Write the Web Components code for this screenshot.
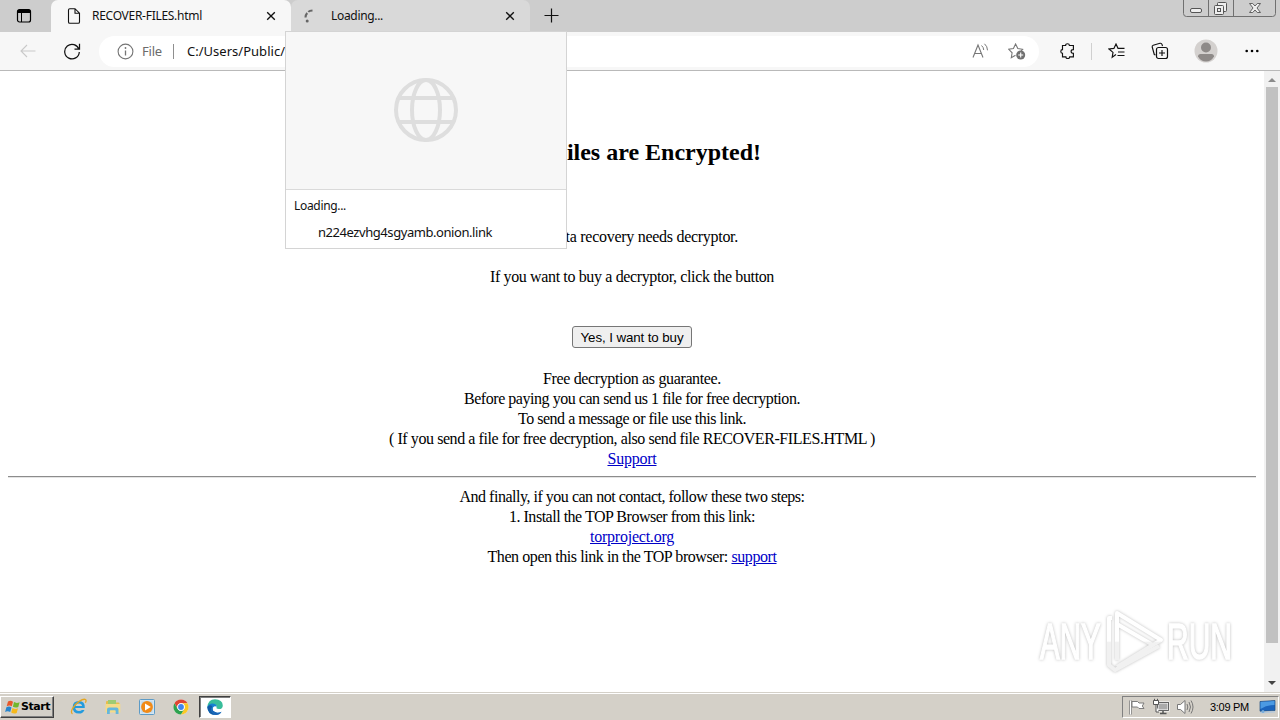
<!DOCTYPE html>
<html lang="en">
<head>
<meta charset="utf-8">
<title>RECOVER-FILES.html</title>
<style>
  html, body { margin: 0; height: 100%; overflow: hidden; }
</style>
</head>
<body>
<desktop-screen></desktop-screen>
<script>
// Text run that spreads its letters to a given width
class FitText extends HTMLElement {
  constructor() {
    super();
    this.attachShadow({ mode: "open" });
    this.shadowRoot.innerHTML = `
      <style>
        :host { display: inline-block; white-space: nowrap; font-variant-ligatures: none; }
      </style><slot></slot>`;
  }

  connectedCallback() {
    const width = Number(this.getAttribute("width"));
    const count = this.textContent.length;
    if (!width || !count) return;
    const natural = this.getBoundingClientRect().width;
    this.style.letterSpacing = (width - natural) / count + "px";
  }
}

// Line icons and small colour icons, keyed by name
const icons = {
  workspace: [16, 16, `<rect x="1.5" y="1.5" width="13" height="12.5" rx="2" fill="none" stroke="#000" stroke-width="1.2"/><path d="M1.5 5V3.2Q1.500 1.500 3.500 1.500h9q2 0 2 1.700V5z"/><path d="M5.500 5v9" stroke="#000"/>`],
  file: [14, 16, `<path d="M1.500 2q0-1.300 1.300-1.300H8l4.500 4.500V14q0 1.300-1.300 1.300H2.800Q1.500 15.300 1.500 14zM8 .8v4.500h4.500" fill="none" stroke="#111" stroke-width="1.100"/>`],
  close: [10, 10, `<path d="M1.200 1.200l7.600 7.600M8.800 1.200L1.200 8.800" stroke="#111" stroke-width="1.350"/>`],
  plus: [15, 15, `<path d="M7.500.5v14M.5 7.500h14" stroke="#111" stroke-width="1.200"/>`],
  spinner: [12, 14, `<path d="M9.500 1.500Q6.500 1.700 5.300 2.900" fill="none" stroke="#666" stroke-width="2"/><path d="M4.200 4Q2.500 6 2.500 8.500" fill="none" stroke="#666" stroke-width="2.100"/><circle cx="4.200" cy="12" r="1.500" fill="#666"/>`],
  back: [16, 14, `<path d="M15.500 7H1M7 1L1 7l6 6" fill="none" stroke="#c9c9c9" stroke-width="1.100"/>`],
  reload: [18, 18, `<path d="M16 7.500A7.300 7.300 0 1 0 16.300 10M16.500 1.800v5.400h-5" fill="none" stroke="#111" stroke-width="1.250"/>`],
  info: [17, 17, `<circle cx="8.500" cy="8.500" r="7.400" fill="none" stroke="#757575" stroke-width="1.100"/><path d="M8.500 7.500v5" stroke="#757575" stroke-width="1.300"/><circle cx="8.500" cy="5" r=".9" fill="#757575"/>`],
  read: [17, 16, `<path d="M1 14.500L6 2l5 12.500M2.700 10.500h6.600" fill="none" stroke="#777" stroke-width="1.100"/><path d="M9.500 2.500q2.200 1.800 2.200 4.500M12.500.8q3 2.600 3 6.500" fill="none" stroke="#777"/>`],
  favadd: [18, 17, `<path d="M7.500 12.300l-4.200 2.500.8-5L.7 6.300l4.700-.8L7.600 1l2.200 4.500 4.800.8-1.500 1.500" fill="none" stroke="#777" stroke-width="1.100"/><circle cx="12.700" cy="12" r="4.500" fill="#707070"/><path d="M12.700 9.500v5M10.200 12h5" stroke="#fff" stroke-width="1.100"/>`],
  puzzle: [16, 16, `<path d="M2.500 2.500h3.100Q5.600.7 7.500.7t1.900 1.800h4v4.100q-2.300 0-2.300 1.800t2.300 1.800v3.700H9.700q0 1.700-1.900 1.700t-1.900-1.700H2.500v-3.700Q.8 10.200.8 8.400t1.700-1.800z" fill="none" stroke="#111" stroke-width="1.150"/>`],
  favorites: [17, 16, `<path d="M8 11.500l-3.800 2.700.8-4.800L1 6l4.900-.6L8 1l2 4.300h6.500M10 9h6.500M9.500 12.500h7" fill="none" stroke="#111" stroke-width="1.150"/>`],
  collections: [18, 18, `<path d="M4.500 13l-1.200-.5L1.200 5Q.9 3.600 2.200 3.200L9 1.300q1.500-.3 2 1.100l.5 1.800" fill="none" stroke="#111" stroke-width="1.150"/><rect x="5.500" y="5.500" width="11" height="11" rx="2" fill="none" stroke="#111" stroke-width="1.200"/><path d="M11 8v6M8 11h6" stroke="#111" stroke-width="1.150"/>`],
  avatar: [24, 24, `<circle cx="12" cy="12" r="11.500" fill="#d4d1cf"/><circle cx="12" cy="8.500" r="5" fill="#8e8a88"/><path d="M4 17.500q0-2.500 2.500-2.500h11q2.500 0 2.500 2.500-2.800 5-8 5t-8-5z" fill="#8e8a88"/>`],
  dots: [14, 4, `<circle cx="1.700" cy="2" r="1.300"/><circle cx="7" cy="2" r="1.300"/><circle cx="12.300" cy="2" r="1.300"/>`],
  globe: [66, 66, `<g fill="none" stroke="#dedede" stroke-width="4"><circle cx="33" cy="33" r="30"/><ellipse cx="33" cy="33" rx="14" ry="30"/><path d="M5.500 21h55M5.500 45h55"/></g>`],
  windows: [16, 16, `<path d="M3 2.500q2.500-1.500 5 .2L6.800 7.300Q4.500 5.800 1.700 7.200z" fill="#e8582a"/><path d="M9 3.100q2.500 1.600 5.600.1L13.300 8q-2.700 1.300-5.400-.2z" fill="#71b72b"/><path d="M1.400 8.300q2.700-1.500 5.100.1L5.200 13Q2.700 11.600.1 12.900z" fill="#2685ce"/><path d="M7.500 9q2.800 1.600 5.500.3L11.700 14q-2.800 1.200-5.500-.4z" fill="#f6b91b"/>`],
  ie: [18, 18, `<path d="M14.800 10.100H5.300q.4 2.900 3.700 2.900 2 0 2.900-1.100h2.600q-1.500 3.600-5.500 3.600-6.300 0-6.300-6.300Q2.700 3 9 3q6.200 0 5.800 7.100zM5.400 8.100h6.700Q11.700 5.400 9 5.400q-3 0-3.600 2.700z" fill="#239bdd"/><path d="M2.500 15.800C-.5 14.500 3.200 7.400 9.200 3.400c5.200-3.500 8.300-2.500 6.200 1.400" fill="none" stroke="#e4a621" stroke-width="1.300"/>`],
  explorer: [18, 18, `<path d="M2 4q0-1 1-1h4l1 1.500h6.500q1 0 1 1V10H2z" fill="#e8bd4b"/><path d="M4 2h8v7H4z" fill="#9ecb72"/><path d="M1.500 6h14.800v8.500H1.500z" fill="#f5db88"/><path d="M3 16V11.500q0-2 2-2h7.500q2 0 2 2V16h-2.800v-2.900q0-.8-.8-.8H6.600q-.8 0-.8.8V16z" fill="#65b7dc"/>`],
  media: [18, 18, `<rect x="1.500" y="1.500" width="15" height="15" rx="1" fill="#d3e5f2" stroke="#5d9bc6"/><rect x="3.500" y="3.500" width="11" height="11" fill="#b9d3e6"/><circle cx="9" cy="9" r="5.900" fill="#f18a17"/><path d="M7 5.500v7L12.800 9z" fill="#fff"/>`],
  chrome: [18, 18, `<circle cx="9" cy="9" r="7.500" fill="#fff"/><path d="M2.500 5.250A7.500 7.500 0 0 1 15.500 5.250H9A3.750 3.750 0 0 0 5.750 10.900z" fill="#df4533"/><path d="M15.500 5.250A7.500 7.500 0 0 1 9 16.500l3.250-5.600A3.750 3.750 0 0 0 9 5.250z" fill="#fbc824"/><path d="M9 16.500A7.500 7.500 0 0 1 2.500 5.250l3.250 5.650a3.750 3.750 0 0 0 6.500 0z" fill="#2da24f"/><circle cx="9" cy="9" r="3.700" fill="#fff"/><circle cx="9" cy="9" r="2.900" fill="#4186ee"/>`],
  edge: [18, 18, `<path d="M1.300 9Q2 1.500 9 1.200q7.500.3 7.800 6.200 0 3.600-4 3.600-3 0-2.200-1.700Q11.200 6.800 8 6.500 3.500 6.300 1.300 9z" fill="#39bd9b"/><path d="M1.300 9Q3.600 4.600 8 5.800q3.200.9 2.700 3-2-1.300-3.700.7-1.800 3.700 4 5.300 2.400.3 4.500-1.100Q13.500 17 9 17 1.700 16.500 1.300 9z" fill="#1680d1"/><path d="M6.300 8.200q-3.500 5.800 3.200 8.700Q2 17 1.300 9q2.200-2.800 5-.8z" fill="#145ba5"/><path d="M7 9.500q-1.800 3.700 4 5.300 2.400.3 4.500-1.100-2 3.400-6 3.200Q3 14 7 9.500z" fill="#1b65b6"/>`],
  flag: [18, 16, `<path d="M2.500 1.500v14" stroke="#777" stroke-width="2.600"/><path d="M2.500 1.500v14" stroke="#fff" stroke-width="1.200"/><path d="M4 2.500h5.500L11 4h5l-1.700 3L16 9.500h-5L9.500 8H4z" fill="#fff" stroke="#707070" stroke-width=".9"/>`],
  network: [18, 18, `<rect x="5.500" y="4.500" width="11" height="8" fill="#aaa" stroke="#fff" stroke-width="2"/><rect x="5.500" y="4.500" width="11" height="8" fill="none" stroke="#555" stroke-width=".9"/><path d="M8 15.500h6.500M11 13v2" stroke="#555" stroke-width="1.500"/><path d="M1.500 2.500h5v4h-5zM2.500.8v2M5.500.8v2M4 7v7h3" fill="#fff" stroke="#555"/>`],
  sound: [18, 16, `<path d="M1.500 5.500h3L9 1.500v13l-4.500-4h-3z" fill="#fff" stroke="#777"/><path d="M11 5q1.600 3 0 6M13 3q3 5 0 10M15 1.500q4 6.500 0 13" fill="none" stroke="#777"/>`],
  desktop: [18, 16, `<path d="M1 2.500l15-1v10l-15 .7z" fill="#1b64bd" stroke="#204d80" stroke-width=".7"/><path d="M1.500 3l14-1v4q-8 0-14 4z" fill="#4b9ae3"/><path d="M1 13.800l15-1" stroke="#b8c9d9" stroke-width="1.500"/><circle cx="4" cy="12.500" r="1.500" fill="#79aedc"/>`],
};

class UiIcon extends HTMLElement {
  constructor() {
    super();
    this.attachShadow({ mode: "open" });
  }

  connectedCallback() {
    const [w, h, body] = icons[this.getAttribute("name")];
    this.shadowRoot.innerHTML = `
      <style>:host { display: block; flex: none; width: ${w}px; height: ${h}px; } svg { display: block; }</style>
      <svg width="${w}" height="${h}" viewBox="0 0 ${w} ${h}">${body}</svg>`;
  }
}

class BrowserTab extends HTMLElement {
  constructor() {
    super();
    this.attachShadow({ mode: "open" });
    this.shadowRoot.innerHTML = `
      <style>
        :host {
          box-sizing: border-box;
          display: flex;
          align-items: center;
          width: 240px;
          height: 32px;
          padding: 0 15px 0 16px;
          border-radius: 7px 7px 0 0;
          background: #d9d9d9;
          font: 12px/16px "Noto Sans", sans-serif;
          color: #111;
        }
        :host([active]) { background: #f7f7f7; }
        .title { flex: 1; padding-left: 11px; }
      </style>
      <slot name="icon"></slot>
      <span class="title"><slot></slot></span>
      <ui-icon name="close"></ui-icon>`;
  }
}

class WindowControls extends HTMLElement {
  constructor() {
    super();
    this.attachShadow({ mode: "open" });
    this.shadowRoot.innerHTML = `
      <style>
        :host { display: block; margin-left: auto; margin-right: 4px; width: 93px; height: 18px; }
        svg { display: block; }
      </style>
      <svg width="93" height="18" fill="none" stroke="#707070">
        <path d="M.5 0v13.500q0 3 3 3h86q3 0 3-3V0M25.500 0v16.500M50.500 0v16.500" />
        <rect x="7.500" y="8.500" width="11" height="4" rx="1.500" fill="#eee" stroke="#555"/>
        <rect x="34.500" y="2.500" width="9" height="9" rx="1" fill="#eee" stroke="#555"/>
        <rect x="31.500" y="5.500" width="9" height="9" rx="1" fill="#eee" stroke="#555"/>
        <rect x="34.500" y="8.500" width="3" height="3" stroke="#555"/>
        <path d="M66.500 3.500h3.200L72 6l2.300-2.500h3.200L74 8l3.500 4.500h-3.200L72 10l-2.300 2.500h-3.200L70 8z" fill="#eee" stroke="#555" stroke-width=".9"/>
      </svg>`;
  }
}

class TabStrip extends HTMLElement {
  constructor() {
    super();
    this.attachShadow({ mode: "open" });
    this.shadowRoot.innerHTML = `
      <style>
        :host { display: flex; height: 32px; background: #cdcdcd; }
        .lead { width: 51px; height: 32px; box-sizing: border-box; padding: 8px 0 0 16px; }
        .new { padding: 8px 0 0 14px; }
      </style>
      <div class="lead"><ui-icon name="workspace"></ui-icon></div>
      <browser-tab active><ui-icon slot="icon" name="file"></ui-icon><fit-text width="110">RECOVER-FILES.html</fit-text></browser-tab>
      <browser-tab style="width: 239px"><ui-icon slot="icon" name="spinner" style="margin: 0 1px 0 -4px"></ui-icon><fit-text width="52" style="margin-left: 4px">Loading...</fit-text></browser-tab>
      <div class="new"><ui-icon name="plus"></ui-icon></div>
      <window-controls></window-controls>`;
  }
}

class NavBar extends HTMLElement {
  constructor() {
    super();
    this.attachShadow({ mode: "open" });
    this.shadowRoot.innerHTML = `
      <style>
        :host {
          box-sizing: border-box;
          display: flex;
          align-items: center;
          height: 39px;
          padding: 0 21px 0 20px;
          border-bottom: 1px solid #b9b9b9;
          background: #f7f7f7;
          font: 13px/18px "Noto Sans", sans-serif;
          color: #111;
        }
        .address {
          box-sizing: border-box;
          display: flex;
          align-items: center;
          width: 940px;
          height: 31px;
          margin-left: 18px;
          padding: 0 13px 0 18px;
          border-radius: 16px;
          background: #fff;
        }
        .scheme { margin-left: 8px; color: #6b6b6b; }
        .bar { width: 1px; height: 15px; margin: 0 13px 0 11px; background: #8f8f8f; }
        .url { flex: 1; }
        .split { width: 1px; height: 17px; background: #d0d0d0; }
      </style>
      <ui-icon name="back"></ui-icon>
      <ui-icon name="reload" style="margin-left: 27px"></ui-icon>
      <div class="address">
        <ui-icon name="info"></ui-icon>
        <span class="scheme"><fit-text width="20">File</fit-text></span>
        <span class="bar"></span>
        <span class="url"><fit-text width="98">C:/Users/Public/</fit-text></span>
        <ui-icon name="read"></ui-icon>
        <ui-icon name="favadd" style="margin-left: 19px"></ui-icon>
      </div>
      <ui-icon name="puzzle" style="margin-left: 21px"></ui-icon>
      <span class="split" style="margin-left: 15px"></span>
      <ui-icon name="favorites" style="margin-left: 16px"></ui-icon>
      <ui-icon name="collections" style="margin-left: 26px"></ui-icon>
      <ui-icon name="avatar" style="margin-left: 25px"></ui-icon>
      <ui-icon name="dots" style="margin-left: 27px"></ui-icon>`;
  }
}

class NotePage extends HTMLElement {
  constructor() {
    super();
    this.attachShadow({ mode: "open" });
    this.shadowRoot.innerHTML = `
      <style>
        :host {
          box-sizing: border-box;
          display: block;
          flex: 1;
          padding: 67px 8px 0;
          background: #fff;
          font: 16px/20px "Liberation Serif", serif;
          color: #000;
          text-align: center;
        }
        h2 { margin: 0 0 60px; height: 28px; font-size: 24px; line-height: 28px; }
        p { box-sizing: border-box; margin: 0; padding-top: 1px; height: 20px; }
        .buy { margin-top: 20px; }
        button {
          display: block;
          box-sizing: border-box;
          width: 120px;
          height: 22px;
          margin: 40px auto 20px;
          padding: 2px 0 0;
          border: 1px solid #767676;
          border-radius: 3px;
          background: #efefef;
          color: #000;
          font: 13.333px/18px "Liberation Sans", sans-serif;
        }
        hr { margin: 8px 0; border: 0; height: 2px; background: linear-gradient(#8c8c8c 50%, #e4e4e4 50%); }
        a { color: #0000c8; text-decoration: underline; }
      </style>
      <h2><fit-text width="265" style="margin-right: 7px">Your Files are Encrypted!</fit-text></h2>
      <p><fit-text width="212">For data recovery needs decryptor.</fit-text></p>
      <p class="buy"><fit-text width="284">If you want to buy a decryptor, click the button</fit-text></p>
      <button><fit-text width="103">Yes, I want to buy</fit-text></button>
      <p><fit-text width="178">Free decryption as guarantee.</fit-text></p>
      <p><fit-text width="336">Before paying you can send us 1 file for free decryption.</fit-text></p>
      <p><fit-text width="228">To send a message or file use this link.</fit-text></p>
      <p><fit-text width="486">( If you send a file for free decryption, also send file RECOVER-FILES.HTML )</fit-text></p>
      <p><fit-text width="49"><a href="#">Support</a></fit-text></p>
      <hr>
      <p><fit-text width="345">And finally, if you can not contact, follow these two steps:</fit-text></p>
      <p><fit-text width="246">1. Install the TOP Browser from this link:</fit-text></p>
      <p><fit-text width="84"><a href="#">torproject.org</a></fit-text></p>
      <p><fit-text width="289">Then open this link in the TOP browser: <a href="#">support</a></fit-text></p>`;
  }
}

class ScrollBar extends HTMLElement {
  constructor() {
    super();
    this.attachShadow({ mode: "open" });
    this.shadowRoot.innerHTML = `
      <style>
        :host { box-sizing: border-box; display: flex; flex-direction: column; align-items: center; width: 16px; background: #f1f1f1; }
        svg { display: block; width: 16px; height: 16px; }
        .thumb { width: 12px; height: 556px; background: #c1c1c1; }
        .rest { flex: 1; }
      </style>
      <svg viewBox="0 0 16 16"><path d="M4 11h8L8 7z" fill="#8b8b8b"/></svg>
      <div class="thumb"></div>
      <div class="rest"></div>
      <svg viewBox="0 0 16 16"><path d="M4 5h8l-4 4z" fill="#444"/></svg>`;
  }
}

class TabPreview extends HTMLElement {
  constructor() {
    super();
    this.attachShadow({ mode: "open" });
    this.shadowRoot.innerHTML = `
      <style>
        :host {
          position: absolute;
          left: 285px;
          top: 31px;
          box-sizing: border-box;
          width: 282px;
          height: 218px;
          border: 1px solid #d4d4d4;
          background: #fff;
          font: 12px/16px "Noto Sans", sans-serif;
          color: #111;
        }
        .thumb { display: flex; justify-content: center; height: 157px; border-bottom: 1px solid #dadada; background: #f7f7f7; }
        .thumb ui-icon { margin-top: 45px; }
        .title { padding: 8px 8px 0; height: 16px; }
        .host { padding: 10px 32px 0; height: 16px; font-size: 13px; }
      </style>
      <div class="thumb"><ui-icon name="globe"></ui-icon></div>
      <div class="title"><fit-text width="52">Loading...</fit-text></div>
      <div class="host"><fit-text width="174">n224ezvhg4sgyamb.onion.link</fit-text></div>`;
  }
}

// Translucent mark lying over the page's corner
class WaterMark extends HTMLElement {
  constructor() {
    super();
    this.attachShadow({ mode: "open" });
    this.shadowRoot.innerHTML = `
      <style>
        :host { position: absolute; left: 1030px; top: 602px; }
        svg { display: block; filter: drop-shadow(0 0 1.700px rgba(0, 0, 0, .26)); }
        text { font: 50px "Liberation Sans", sans-serif; }
      </style>
      <svg width="250" height="78">
        <defs>
          <linearGradient id="fade" gradientUnits="userSpaceOnUse" x1="0" y1="0" x2="0" y2="78">
            <stop offset=".5" stop-color="#fff"/><stop offset=".52" stop-color="#f1f1f1"/>
          </linearGradient>
        </defs>
        <g fill="url(#fade)" stroke="url(#fade)" stroke-width="1.500">
          <text transform="translate(10 57) scale(.59 1)">ANY</text>
          <text transform="translate(137 57) scale(.6 1)">RUN</text>
        </g>
        <g fill="none" stroke="url(#fade)" stroke-width="4" stroke-linejoin="round">
          <path d="M87 58V11l44 27-44 27 M87 22l36 21"/>
          <path d="M82 16h-3v47l6 5 44-24"/>
        </g>
      </svg>`;
  }
}

class TaskBar extends HTMLElement {
  constructor() {
    super();
    this.attachShadow({ mode: "open" });
    this.shadowRoot.innerHTML = `
      <style>
        :host {
          box-sizing: border-box;
          display: flex;
          align-items: center;
          height: 28px;
          padding: 1px 1px 0 0;
          border-top: 1px solid #d4d0c8;
          box-shadow: inset 0 1px #fff;
          background: #d4d0c8;
          color: #000;
        }
        .start {
          box-sizing: border-box;
          display: flex;
          align-items: center;
          width: 54px;
          height: 22px;
          padding-left: 4px;
          border: 1px solid;
          border-color: #fff #404040 #404040 #fff;
          box-shadow: inset -1px -1px #808080;
          font: bold 11px/14px "DejaVu Sans", sans-serif;
        }
        .quick { display: flex; align-items: center; gap: 16px; margin-left: 16px; }
        .open {
          box-sizing: border-box;
          display: flex;
          align-items: center;
          justify-content: center;
          width: 32px;
          height: 22px;
          margin-left: 9px;
          border: 1px solid;
          border-color: #404040 #fff #fff #404040;
          box-shadow: inset 1px 1px #808080;
          background: #fff;
        }
        .tray {
          box-sizing: border-box;
          display: flex;
          align-items: center;
          width: 157px;
          height: 22px;
          margin-left: auto;
          padding-left: 5px;
          border: 1px solid;
          border-color: #808080 #fff #fff #808080;
          font: 11px/14px "Liberation Sans", sans-serif;
        }
      </style>
      <div class="start"><ui-icon name="windows"></ui-icon><fit-text width="29">Start</fit-text></div>
      <div class="quick">
        <ui-icon name="ie"></ui-icon>
        <ui-icon name="explorer"></ui-icon>
        <ui-icon name="media"></ui-icon>
        <ui-icon name="chrome"></ui-icon>
      </div>
      <div class="open"><ui-icon name="edge"></ui-icon></div>
      <div class="tray">
        <ui-icon name="flag"></ui-icon>
        <ui-icon name="network" style="margin-left: 6px"></ui-icon>
        <ui-icon name="sound" style="margin-left: 6px"></ui-icon>
        <fit-text width="39" style="margin-left: 16px">3:09 PM</fit-text>
        <ui-icon name="desktop" style="margin-left: 10px"></ui-icon>
      </div>`;
  }
}

class DesktopScreen extends HTMLElement {
  constructor() {
    super();
    this.attachShadow({ mode: "open" });
    this.shadowRoot.innerHTML = `
      <style>
        :host { display: flex; flex-direction: column; position: relative; width: 1280px; height: 720px; overflow: hidden; background: #fff; }
        .view { display: flex; flex: 1; min-height: 0; }
      </style>
      <tab-strip></tab-strip>
      <nav-bar></nav-bar>
      <div class="view">
        <note-page></note-page>
        <scroll-bar></scroll-bar>
      </div>
      <task-bar></task-bar>
      <tab-preview></tab-preview>
      <water-mark></water-mark>`;
  }
}

// Define custom elements
customElements.define("fit-text", FitText);
customElements.define("ui-icon", UiIcon);
customElements.define("browser-tab", BrowserTab);
customElements.define("window-controls", WindowControls);
customElements.define("tab-strip", TabStrip);
customElements.define("nav-bar", NavBar);
customElements.define("note-page", NotePage);
customElements.define("scroll-bar", ScrollBar);
customElements.define("tab-preview", TabPreview);
customElements.define("water-mark", WaterMark);
customElements.define("task-bar", TaskBar);
customElements.define("desktop-screen", DesktopScreen);
</script>
</body>
</html>
